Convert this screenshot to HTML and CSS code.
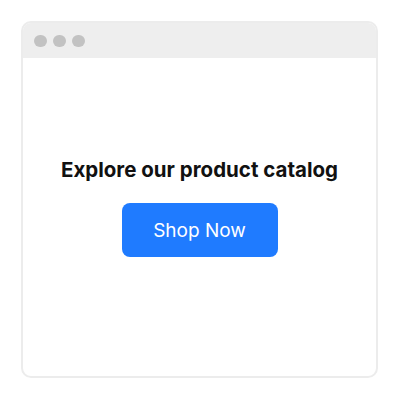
FILE: index.html
```html
<!DOCTYPE html>
<html>
<head>
<meta charset="utf-8">
<link rel="stylesheet" href="styles.css">
</head>
<body>
<div class="window">
  <div class="titlebar">
    <span class="dot"></span><span class="dot"></span><span class="dot"></span>
  </div>
  <div class="content">
    <h1 class="heading">Explore our product catalog</h1>
    <button class="cta">Shop Now</button>
  </div>
</div>
</body>
</html>
```
FILE: styles.css
```css
html, body {
  margin: 0;
  padding: 0;
  background: #ffffff;
}
body {
  padding: 21px;
  font-family: Inter, "Liberation Sans", sans-serif;
}
.window {
  box-sizing: border-box;
  width: 357px;
  height: 357px;
  border: 2px solid #ececec;
  border-radius: 10px;
  overflow: hidden;
  display: flex;
  flex-direction: column;
  background: #fff;
}
.titlebar {
  height: 35px;
  background: #eeeeee;
  display: flex;
  align-items: center;
  gap: 6.5px;
  padding-left: 11px;
  padding-top: 1px;
  box-sizing: border-box;
  flex-shrink: 0;
}
.dot {
  width: 12.5px;
  height: 12.5px;
  border-radius: 50%;
  background: #c2c2c2;
}
.content {
  flex: 1;
  display: flex;
  flex-direction: column;
  align-items: center;
  padding-top: 100px;
}
.heading {
  margin: 0;
  font-size: 20.5px;
  font-weight: 700;
  color: #111;
  line-height: 24px;
}
.cta {
  margin-top: 21px;
  width: 156px;
  height: 54px;
  border: none;
  border-radius: 8px;
  background: #1f7bff;
  color: #fff;
  font-family: Inter, "Liberation Sans", sans-serif;
  font-size: 19px;
  font-weight: 400;
}
```
